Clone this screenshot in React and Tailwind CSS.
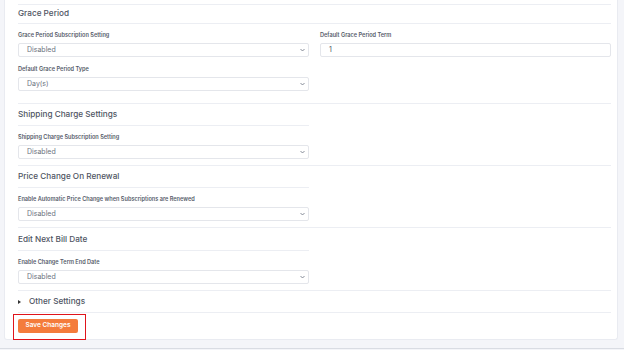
import React from "react";

function Chevron() {
  return (
    <svg width="5" height="4" viewBox="0 0 10 6" className="text-[#6b7280]">
      <path d="M1 1l4 4 4-4" fill="none" stroke="currentColor" strokeWidth="1.6" />
    </svg>
  );
}

function SelectBox({ value }) {
  return (
    <div className="h-[14px] border border-[#e4e6eb] rounded-[2px] bg-white flex items-center justify-between pl-[8px] pr-[3px] text-[7px] text-[#6b7280]">
      <span>{value}</span>
      <Chevron />
    </div>
  );
}

function Field({ label, children, className = "" }) {
  return (
    <div className={className}>
      <div className="h-[8px] leading-[8px] text-[5.6px] font-semibold text-[#555b69] mb-[4px]">{label}</div>
      {children}
    </div>
  );
}

function Heading({ children, className = "" }) {
  return (
    <div className={"border-t border-[#eceef3] flex items-center text-[8.2px] font-medium text-[#4f5563] " + className}>
      {children}
    </div>
  );
}

export default function App() {
  return (
    <div className="min-h-screen bg-[#f4f5f9] relative" style={{ fontFamily: "Inter, 'Noto Sans', sans-serif" }}>
      <div className="ml-[4px] w-[614px] h-[340px] bg-white border-x border-b border-[#e9ebf1] rounded-b-[3px] pl-[13px] pr-[6px] pt-[4px]">
        <Heading className="h-[19px] pb-[2px]">Grace Period</Heading>
        <div className="border-t border-[#eceef3] pt-[7px] pb-[12px] grid grid-cols-2 gap-x-[11px]">
          <div>
            <Field label="Grace Period Subscription Setting">
              <SelectBox value="Disabled" />
            </Field>
            <Field label="Default Grace Period Type" className="mt-[8px]">
              <SelectBox value="Day(s)" />
            </Field>
          </div>
          <div>
            <Field label="Default Grace Period Term">
              <div className="h-[14px] border border-[#e4e6eb] rounded-[2px] flex items-center pl-[8px] text-[7px] text-[#4b5563]">1</div>
            </Field>
          </div>
        </div>

        <Heading className="h-[22px]">Shipping Charge Settings</Heading>
        <div className="border-t border-[#eceef3] pt-[7px] pb-[6px] w-[291px]">
          <Field label="Shipping Charge Subscription Setting">
            <SelectBox value="Disabled" />
          </Field>
        </div>

        <Heading className="h-[22px]">Price Change On Renewal</Heading>
        <div className="border-t border-[#eceef3] pt-[7px] pb-[6px] w-[291px]">
          <Field label="Enable Automatic Price Change when Subscriptions are Renewed">
            <SelectBox value="Disabled" />
          </Field>
        </div>

        <Heading className="h-[23px]">Edit Next Bill Date</Heading>
        <div className="border-t border-[#eceef3] pt-[7px] pb-[6px] w-[291px]">
          <Field label="Enable Change Term End Date">
            <SelectBox value="Disabled" />
          </Field>
        </div>

        <Heading className="h-[22px] gap-[8px]">
          <span className="w-0 h-0 border-y-[2.5px] border-y-transparent border-l-[3px] border-l-[#333]" />
          <span>Other Settings</span>
        </Heading>
        <div className="border-t border-[#eceef3] pt-[6px] flex">
          <button className="h-[14px] w-[60px] bg-[#f47c3c] rounded-[2px] text-white text-[6.5px] font-semibold flex items-center justify-center">
            Save Changes
          </button>
        </div>
      </div>
      <div className="absolute left-[13px] top-[314px] w-[73px] h-[26px] border border-[#e0141b]" />
      <div className="absolute left-0 right-0 top-[348px] h-[1px] bg-[#d9dce3]" />
    </div>
  );
}
